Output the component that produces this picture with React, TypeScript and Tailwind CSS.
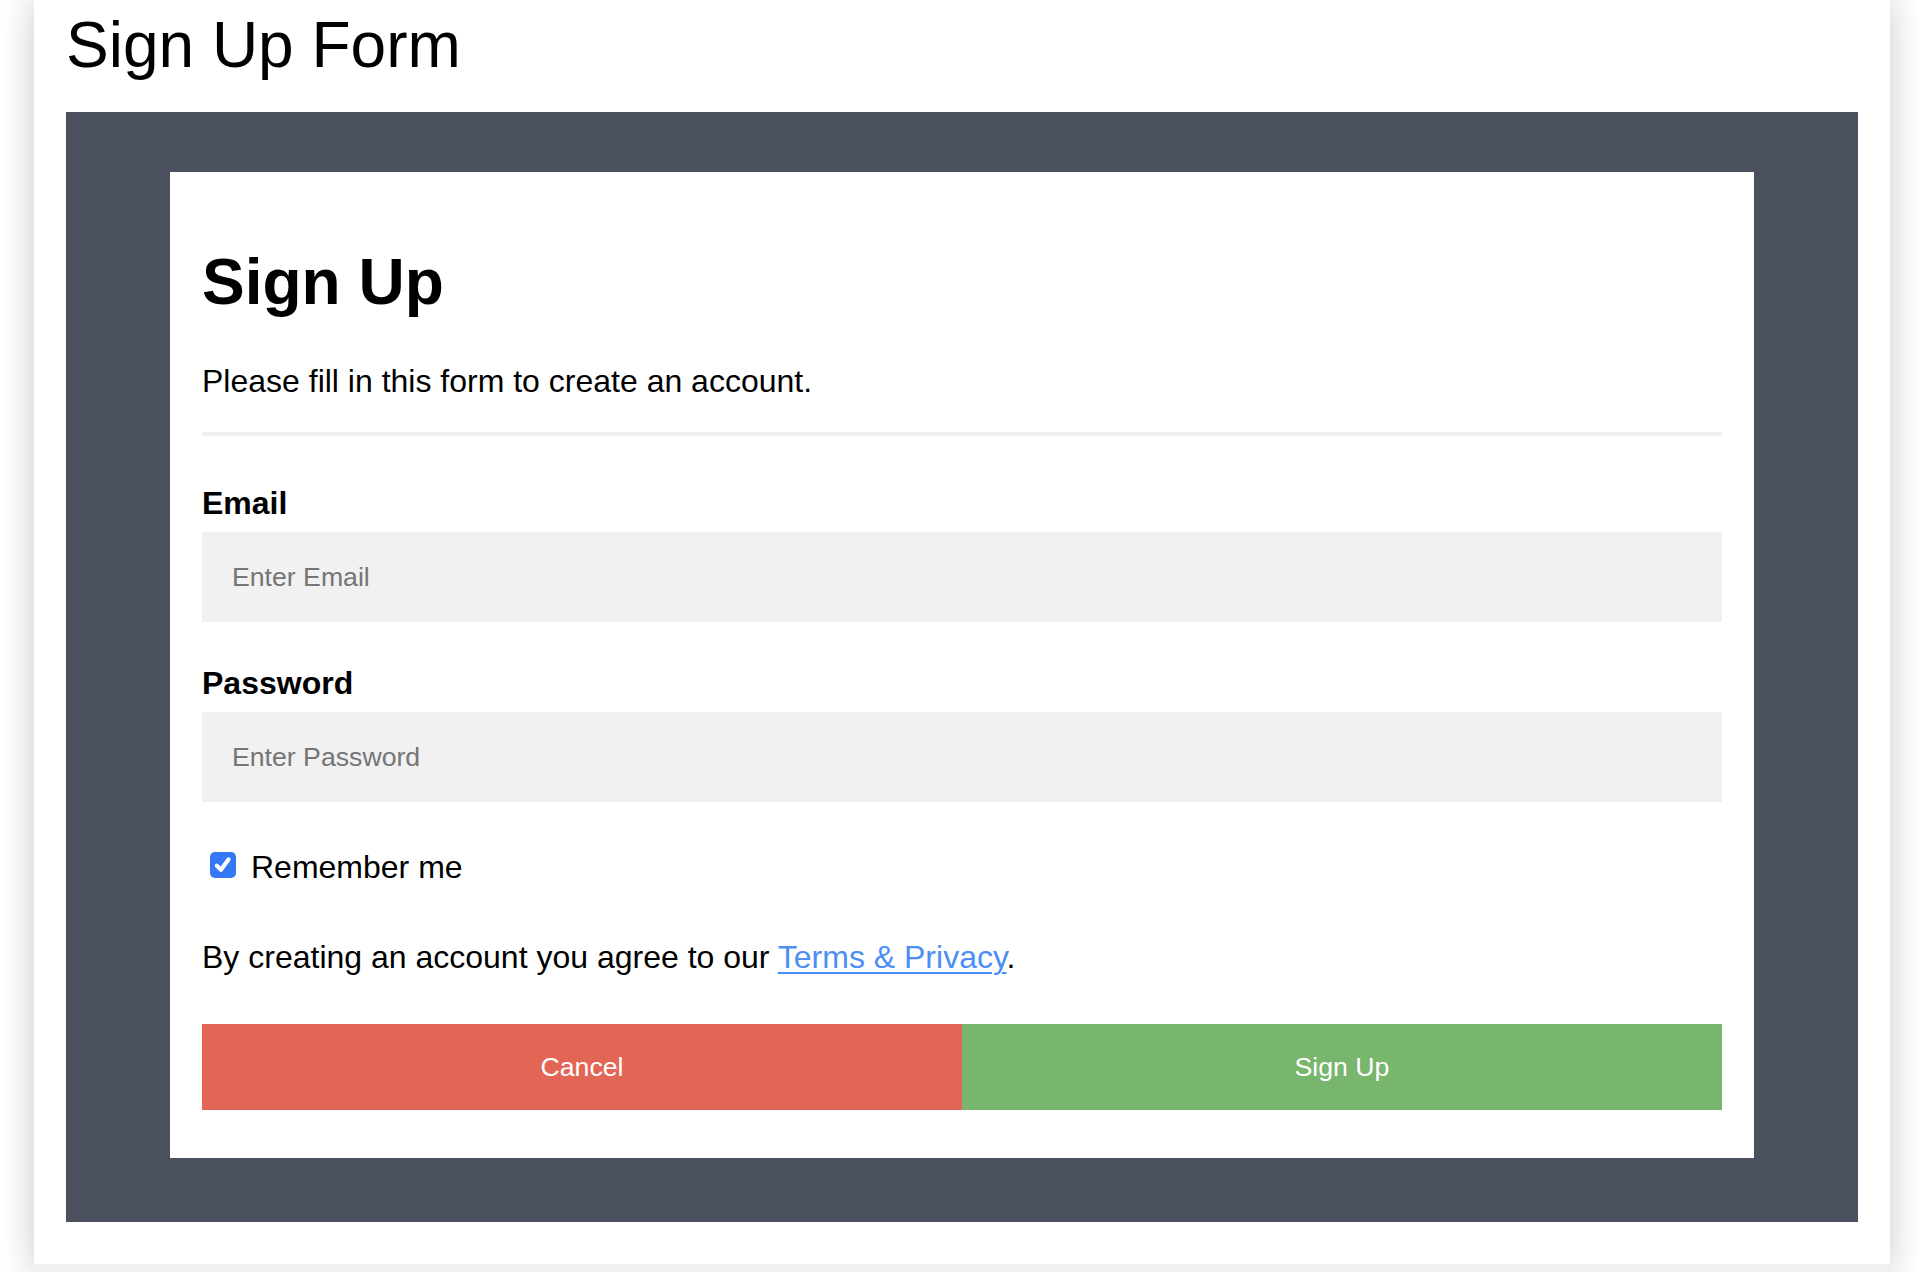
import React from "react";

export default function App() {
  return (
    <div className="h-screen overflow-hidden bg-white font-['Liberation_Sans',Arial,sans-serif] text-black">
      <div className="ml-[34px] flex h-full w-[1856px] flex-col bg-white shadow-[0_0_34px_rgba(0,0,0,0.22)]">
        <div className="px-[32px]">
          <h1 className="mt-[8px] text-[64px] font-normal leading-[74px]">Sign Up Form</h1>

          {/* Dark backdrop */}
          <div className="mt-[30px] bg-[#4a505d] px-[104px] pb-[64px] pt-[60px]">
            <form className="bg-white px-[32px] pb-[48px] pt-[73px]">
              <h2 className="text-[64px] font-bold leading-[74px]">Sign Up</h2>
              <p className="mt-[44px] text-[32px] leading-[37px]">
                Please fill in this form to create an account.
              </p>
              <div className="mt-[32px] h-[4px] bg-[#f1f1f1]" />

              <label className="mt-[49px] block text-[32px] font-bold leading-[37px]">Email</label>
              <input
                type="text"
                placeholder="Enter Email"
                className="mt-[10px] block h-[90px] w-full bg-[#f1f1f1] px-[30px] text-[26.67px] outline-none placeholder:text-[#757575]"
              />

              <label className="mt-[43px] block text-[32px] font-bold leading-[37px]">Password</label>
              <input
                type="password"
                placeholder="Enter Password"
                className="mt-[10px] block h-[90px] w-full bg-[#f1f1f1] px-[30px] text-[26.67px] outline-none placeholder:text-[#757575]"
              />

              <div className="mt-[47px] flex items-start text-[32px] leading-[37px]">
                <span className="ml-[8px] mt-[3px] flex h-[26px] w-[26px] items-center justify-center rounded-[5px] bg-[#3478f6]">
                  <svg viewBox="0 0 16 16" className="h-[22px] w-[22px]" fill="none" stroke="white" strokeWidth={3} strokeLinecap="round" strokeLinejoin="round">
                    <polyline points="3.5 8.5 6.5 11.5 12 4" />
                  </svg>
                </span>
                <span className="ml-[15px]">Remember me</span>
              </div>

              <p className="mt-[53px] text-[32px] leading-[37px]">
                By creating an account you agree to our{" "}
                <a href="#" className="text-[#4d8ef4] underline decoration-[2px] underline-offset-[4px]">
                  Terms &amp; Privacy
                </a>
                .
              </p>

              <div className="mt-[48px] flex">
                <button type="button" className="h-[86px] w-1/2 bg-[#e36556] text-[26.67px] text-white">
                  Cancel
                </button>
                <button type="submit" className="h-[86px] w-1/2 bg-[#78b56d] text-[26.67px] text-white">
                  Sign Up
                </button>
              </div>
            </form>
          </div>
        </div>
        <div className="mt-[42px] flex-1 bg-[#f0f0f0]" />
      </div>
    </div>
  );
}
